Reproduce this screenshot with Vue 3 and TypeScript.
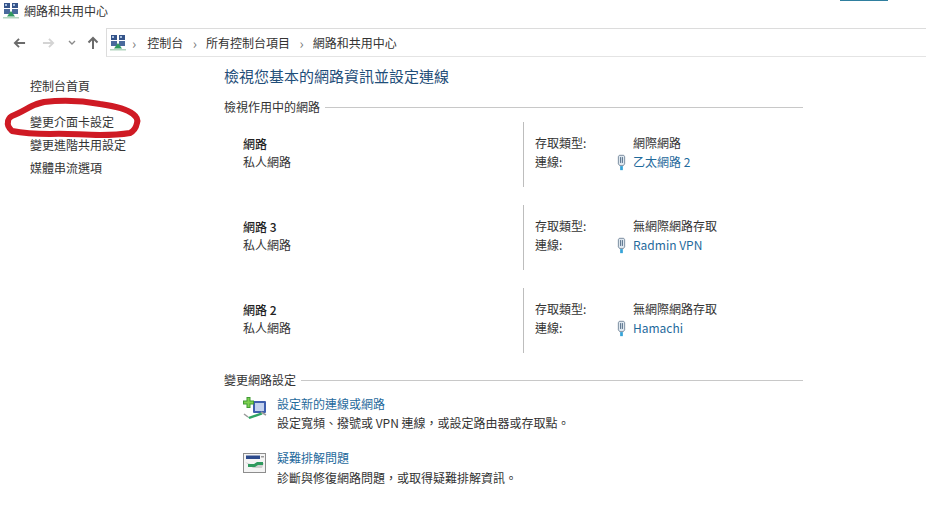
<script setup lang="ts">
interface Net { name: string; access: string; conn: string }
const nets: Net[] = [
  { name: '網路', access: '網際網路', conn: '乙太網路 2' },
  { name: '網路 3', access: '無網際網路存取', conn: 'Radmin VPN' },
  { name: '網路 2', access: '無網際網路存取', conn: 'Hamachi' },
]
const links = ['控制台首頁', '變更介面卡設定', '變更進階共用設定', '媒體串流選項']
</script>

<template>
  <div class="window">
    <div class="accent"></div>
    <header class="titlebar">
      <svg class="netico" viewBox="0 0 16 16">
        <rect x="1" y="0" width="6" height="5" fill="#35548a"/><rect x="9" y="0" width="6" height="5" fill="#35548a"/>
        <rect x="1" y="6" width="6" height="5" fill="#4a6a9c"/><rect x="9" y="6" width="6" height="5" fill="#4a6a9c"/>
        <rect x="2" y="1" width="2" height="2" fill="#a8c0e0"/><rect x="10" y="1" width="2" height="2" fill="#a8c0e0"/>
        <path d="M8 8l4 5.500H4z" fill="#2f9a5e"/><rect x="0" y="14" width="16" height="1.500" fill="#b4d6c0"/>
      </svg>
      <span>網路和共用中心</span>
    </header>
    <nav class="navbar">
      <svg class="arrow" viewBox="0 0 14 12"><path d="M13 6H2M6.500 1.500L2 6l4.500 4.500" fill="none" stroke="#6b6b6b" stroke-width="2"/></svg>
      <svg class="arrow dim" viewBox="0 0 14 12"><path d="M1 6h11M7.500 1.500L12 6l-4.500 4.500" fill="none" stroke="#d4d4d4" stroke-width="2"/></svg>
      <svg class="chev" viewBox="0 0 8 6"><path d="M1 1l3 3 3-3" fill="none" stroke="#8a8a8a" stroke-width="1.400"/></svg>
      <svg class="up" viewBox="0 0 12 14"><path d="M6 13V2M1.500 6.500L6 2l4.500 4.500" fill="none" stroke="#6b6b6b" stroke-width="2"/></svg>
      <div class="address">
        <svg class="netico" viewBox="0 0 16 16">
          <rect x="1" y="0" width="6" height="5" fill="#35548a"/><rect x="9" y="0" width="6" height="5" fill="#35548a"/>
          <rect x="1" y="6" width="6" height="5" fill="#4a6a9c"/><rect x="9" y="6" width="6" height="5" fill="#4a6a9c"/>
          <rect x="2" y="1" width="2" height="2" fill="#a8c0e0"/><rect x="10" y="1" width="2" height="2" fill="#a8c0e0"/>
          <path d="M8 8l4 5.500H4z" fill="#2f9a5e"/><rect x="0" y="14" width="16" height="1.500" fill="#b4d6c0"/>
        </svg>
        <span class="sep first">›</span><span>控制台</span>
        <span class="sep">›</span><span>所有控制台項目</span>
        <span class="sep">›</span><span>網路和共用中心</span>
      </div>
    </nav>
    <div class="body">
      <aside class="side">
        <a v-for="l in links" :key="l" class="sidelink">{{ l }}</a>
        <svg class="scribble" viewBox="0 0 150 45">
          <path d="M44 7C62 5 84 6 100 9C114 11 127 14 133 19C137 22 138 25 137 28C136 33 134 36 130 38C118 40 108 40 100 40C82 40 66 38 50 39C36 39 22 38 12 36C9 33 7 30 8 27C8 24 9 23 12 21C20 18 26 14 32 11C36 9 40 8 44 7Z" fill="none" stroke="#cf1a24" stroke-width="6" stroke-linecap="round" stroke-linejoin="round"/>
        </svg>
      </aside>
      <main class="content">
        <h1>檢視您基本的網路資訊並設定連線</h1>
        <div class="section"><span>檢視作用中的網路</span><i></i></div>
        <div class="nets">
          <div v-for="n in nets" :key="n.name" class="net">
            <div class="netname"><b>{{ n.name }}</b><span>私人網路</span></div>
            <div class="netinfo">
              <div class="row"><span class="lbl">存取類型:</span><span class="val">{{ n.access }}</span></div>
              <div class="row">
                <span class="lbl">連線:</span>
                <svg class="plug" viewBox="0 0 10 18">
                  <path d="M2.500 1h5l1 1.500v8l-1.500 2h-4l-1.500-2v-8z" fill="#dfe8f0" stroke="#6f8296" stroke-width="1"/>
                  <path d="M4 3v6.500M6 3v6.500" stroke="#46627e" stroke-width="1"/>
                  <rect x="3.500" y="13" width="3" height="4.500" fill="#35a3d8"/>
                </svg>
                <a class="link">{{ n.conn }}</a>
              </div>
            </div>
          </div>
        </div>
        <div class="section second"><span>變更網路設定</span><i></i></div>
        <div class="task">
          <svg class="taskico" viewBox="0 0 24 24">
            <rect x="10" y="4" width="13" height="12" rx="1" fill="#3f5fae"/><rect x="12" y="6" width="9" height="8" fill="#c4d2ee"/>
            <path d="M3.500 0h4v3.500H11v4H7.500V11h-4V7.500H0v-4h3.500z" fill="#3f9a35"/><path d="M4.500 1h2v3.500H10v2H6.500V10h-2V6.500H1v-2h3.500z" fill="#7ed04f"/>
            <path d="M1 17l4 3M18 15l5 3" stroke="#9a9a9a" stroke-width="1.500"/>
            <path d="M5 20l13-4.500 1.500 2L6.500 22z" fill="#2fa463"/>
          </svg>
          <div><a class="link">設定新的連線或網路</a><p>設定寬頻、撥號或 VPN 連線，或設定路由器或存取點。</p></div>
        </div>
        <div class="task">
          <svg class="taskico" viewBox="0 0 24 24">
            <rect x="0.500" y="2.500" width="22" height="19" fill="#f4f4f4" stroke="#8d8d8d"/>
            <rect x="3" y="4.500" width="14" height="3.500" fill="#2c4a8c"/><rect x="18" y="5" width="3" height="1.500" fill="#9a9a9a"/>
            <path d="M2 11l8 6h9l2-5h-7l-4 2z" fill="#cfcfcf"/>
            <path d="M5 13h6l3-2h6v3h-5l-3 2H5z" fill="#2f9a5e"/>
          </svg>
          <div><a class="link">疑難排解問題</a><p>診斷與修復網路問題，或取得疑難排解資訊。</p></div>
        </div>
      </main>
    </div>
  </div>
</template>

<style>
html, body { margin: 0; background: #fff; }
</style>

<style scoped>
.window { width: 926px; height: 520px; overflow: hidden; position: relative; background: #fff; color: #333; font: 12px/16px "Noto Sans CJK TC", "Noto Sans", sans-serif; }
.accent { position: absolute; top: 0; right: 38px; width: 48px; height: 1px; background: #2f7f9f; }
.titlebar { height: 28px; display: flex; align-items: flex-start; gap: 5px; padding: 3px 0 0 3px; box-sizing: border-box; }
.netico { width: 16px; height: 16px; flex: none; }
.navbar { height: 29px; display: flex; align-items: center; box-sizing: border-box; padding-left: 13px; }
.arrow { width: 13px; height: 12px; margin-right: 16px; }
.arrow.dim { margin-right: 13px; }
.chev { width: 8px; height: 6px; margin-right: 11px; }
.up { width: 12px; height: 14px; margin-right: 7px; }
.address { flex: 1; height: 29px; display: flex; align-items: center; box-sizing: border-box; padding-left: 3px; border: 1px solid #dcdcdc; border-right: 0; border-bottom-color: #e4e4e4; }
.sep { color: #777; margin: 0 9px 0 9.500px; font-size: 14px; }
.sep.first { margin: 0 11px 0 6px; }
.body { display: flex; }
.side { width: 224px; flex: none; position: relative; padding: 21px 0 0 30px; box-sizing: border-box; display: flex; flex-direction: column; gap: 7px; }
.sidelink { display: block; color: #333; line-height: 16px; }
.sidelink:first-child { margin-bottom: 13px; }
.scribble { position: absolute; left: 0; top: 38px; width: 150px; height: 45px; }
.content { width: 579px; padding-top: 8px; }
h1 { margin: 0; font-size: 15px; font-weight: 400; line-height: 22px; color: #1f4e79; }
.section { display: flex; align-items: center; gap: 5px; margin-top: 12px; }
.section i { flex: 1; height: 1px; background: #c8c8c8; }
.section.second { margin-top: 19px; }
.nets { display: flex; flex-direction: column; gap: 18px; margin-top: 7px; }
.net { display: flex; height: 65px; }
.netname { width: 299px; padding: 13px 0 0 19px; box-sizing: border-box; display: flex; flex-direction: column; gap: 1px; }
.netname b { font-weight: 500; color: #222; line-height: 17px; }
.netname span { line-height: 17px; color: #333; }
.netinfo { flex: 1; border-left: 1px solid #bdbdbd; padding: 13px 0 0 11px; display: flex; flex-direction: column; gap: 3px; }
.row { display: flex; align-items: center; height: 16px; }
.lbl { width: 98px; flex: none; }
.row .lbl + svg { margin-left: -16px; }
.plug { width: 9px; height: 17px; margin-right: 7px; flex: none; }
.link { color: #1f6a9c; }
.task { display: flex; gap: 10px; margin: 8px 0 0 19px; }
.task + .task { margin-top: 19px; }
.taskico { width: 24px; height: 24px; flex: none; margin-top: 1px; }
.task p { margin: 3px 0 0; }
.task + .task p { margin-top: 4px; }
.task .link { display: block; }
</style>
